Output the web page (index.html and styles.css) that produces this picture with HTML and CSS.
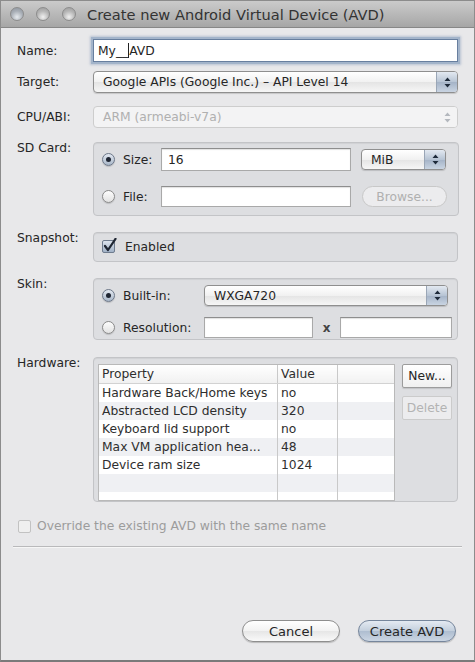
FILE: index.html
```html
<!DOCTYPE html>
<html lang="en">
<head>
    <meta charset="UTF-8">
    <meta name="viewport" content="width=device-width, initial-scale=1.0">
    <title>Create new Android Virtual Device (AVD)</title>
    <link rel="stylesheet" href="styles.css">
</head>
<body>

<div class="window">
    <div class="titlebar">
        <div class="lights">
            <span class="light light-close"></span>
            <span class="light"></span>
            <span class="light"></span>
        </div>
        <div class="title">Create new Android Virtual Device (AVD)</div>
    </div>

    <div class="content">
        <div class="row row-name">
            <div class="label">Name:</div>
            <div class="text-field focused">My__<span class="caret"></span>AVD</div>
        </div>

        <div class="row row-target">
            <div class="label">Target:</div>
            <div class="popup popup-wide">
                <span class="popup-text">Google APIs (Google Inc.) – API Level 14</span>
                <span class="popup-arrows">
                    <svg width="7" height="11" viewBox="0 0 7 11"><path d="M3.5 0.5 L6.5 4 L0.5 4 Z M3.5 10.5 L6.5 7 L0.5 7 Z" fill="#1e2a3a"/></svg>
                </span>
            </div>
        </div>

        <div class="row row-cpu">
            <div class="label">CPU/ABI:</div>
            <div class="popup popup-wide disabled">
                <span class="popup-text">ARM (armeabi-v7a)</span>
                <span class="popup-arrows">
                    <svg width="7" height="11" viewBox="0 0 7 11"><path d="M3.5 0.5 L6.5 4 L0.5 4 Z M3.5 10.5 L6.5 7 L0.5 7 Z" fill="#b4b8be"/></svg>
                </span>
            </div>
        </div>

        <div class="row row-group row-sd">
            <div class="label">SD Card:</div>
            <div class="group group-sd">
                <div class="group-line">
                    <div class="choice choice-sd"><span class="radio on"></span>Size:</div>
                    <div class="text-field field-sd">16</div>
                    <div class="popup popup-unit">
                        <span class="popup-text">MiB</span>
                        <span class="popup-arrows">
                            <svg width="7" height="11" viewBox="0 0 7 11"><path d="M3.5 0.5 L6.5 4 L0.5 4 Z M3.5 10.5 L6.5 7 L0.5 7 Z" fill="#1e2a3a"/></svg>
                        </span>
                    </div>
                </div>
                <div class="group-line line-file">
                    <div class="choice choice-sd"><span class="radio"></span>File:</div>
                    <div class="text-field field-sd"></div>
                    <div class="pill disabled">Browse...</div>
                </div>
            </div>
        </div>

        <div class="row row-group row-snapshot">
            <div class="label">Snapshot:</div>
            <div class="group group-snapshot">
                <div class="choice">
                    <svg class="check" width="15" height="15" viewBox="0 0 15 15">
                        <defs>
                            <linearGradient id="chk" x1="0" y1="0" x2="0" y2="1">
                                <stop offset="0" stop-color="#dfe6ef"/>
                                <stop offset="1" stop-color="#9fb0c6"/>
                            </linearGradient>
                        </defs>
                        <rect x="0.5" y="2.5" width="12" height="12" rx="1.5" fill="url(#chk)" stroke="#6f7c8e"/>
                        <path d="M3 8 L6 12 L13.5 0.8" fill="none" stroke="#1f2633" stroke-width="2.2" stroke-linecap="round" stroke-linejoin="round"/>
                    </svg>
                    Enabled
                </div>
            </div>
        </div>

        <div class="row row-group row-skin">
            <div class="label">Skin:</div>
            <div class="group group-skin">
                <div class="group-line">
                    <div class="choice choice-skin"><span class="radio on"></span>Built-in:</div>
                    <div class="popup popup-skin">
                        <span class="popup-text">WXGA720</span>
                        <span class="popup-arrows">
                            <svg width="7" height="11" viewBox="0 0 7 11"><path d="M3.5 0.5 L6.5 4 L0.5 4 Z M3.5 10.5 L6.5 7 L0.5 7 Z" fill="#1e2a3a"/></svg>
                        </span>
                    </div>
                </div>
                <div class="group-line line-res">
                    <div class="choice choice-skin"><span class="radio"></span>Resolution:</div>
                    <div class="text-field field-res"></div>
                    <span class="times">x</span>
                    <div class="text-field field-res2"></div>
                </div>
            </div>
        </div>

        <div class="row row-group row-hardware">
            <div class="label">Hardware:</div>
            <div class="group group-hardware">
                <div class="table-box">
                    <table class="props">
                        <thead>
                            <tr><th class="col-prop">Property</th><th class="col-val">Value</th><th class="col-extra"></th></tr>
                        </thead>
                        <tbody>
                            <tr><td>Hardware Back/Home keys</td><td>no</td><td></td></tr>
                            <tr><td>Abstracted LCD density</td><td>320</td><td></td></tr>
                            <tr><td>Keyboard lid support</td><td>no</td><td></td></tr>
                            <tr><td>Max VM application hea...</td><td>48</td><td></td></tr>
                            <tr><td>Device ram size</td><td>1024</td><td></td></tr>
                            <tr><td></td><td></td><td></td></tr>
                            <tr><td></td><td></td><td></td></tr>
                        </tbody>
                    </table>
                </div>
                <div class="side-buttons">
                    <div class="square-btn">New...</div>
                    <div class="square-btn disabled">Delete</div>
                </div>
            </div>
        </div>

        <div class="row row-override">
            <span class="box-empty"></span>
            Override the existing AVD with the same name
        </div>

        <div class="separator"></div>

        <div class="actions">
            <div class="pill pill-action">Cancel</div>
            <div class="pill pill-action default">Create AVD</div>
        </div>
    </div>
</div>

</body>
</html>
```

FILE: styles.css
```css
body {
    margin: 0;
    background-color: #e8e8ea;
}

.window {
    width: 475px;
    height: 662px;
    box-sizing: border-box;
    border: 1px solid #8c8c8c;
    border-bottom: 2px solid #7a7a7a;
    background-color: #e8e8ea;
    font-family: "DejaVu Sans", sans-serif;
    font-size: 12.3px;
    color: #262626;
    display: flex;
    flex-direction: column;
}

/* Barra de título */
.titlebar {
    height: 26px;
    flex: none;
    display: flex;
    align-items: center;
    background: linear-gradient(#cbcbcb, #a6a6a6);
    border-bottom: 1px solid #878787;
}
.lights {
    display: flex;
    gap: 12px;
    margin-left: 9px;
}
.light {
    width: 12px;
    height: 12px;
    border-radius: 50%;
    border: 1px solid #8c8c8c;
    background: radial-gradient(circle at 50% 75%, #f0f0f0, #b6b6b6 55%, #9a9a9a);
}
.light-close {
    background: radial-gradient(circle at 50% 75%, #e6eaee, #a8aeb6 55%, #8c939c);
}
.title {
    margin-left: 11px;
    font-size: 14.6px;
    color: #333;
}

.content {
    flex: 1;
    display: flex;
    flex-direction: column;
    padding: 0 16px 18px 16px;
}

.row {
    display: flex;
    align-items: center;
}
.row-group {
    align-items: flex-start;
}
.label {
    width: 76px;
    flex: none;
}
.row-group .label {
    line-height: 12px;
}

.row-name { margin-top: 11px; }
.row-target { margin-top: 9px; }
.row-cpu { margin-top: 13px; }
.row-sd { margin-top: 14px; }
.row-snapshot { margin-top: 16px; }
.row-skin { margin-top: 16px; }
.row-hardware { margin-top: 17px; }
.row-override { margin-top: 17px; color: #9c9c9c; }

/* Campos de texto */
.text-field {
    box-sizing: border-box;
    height: 21px;
    background-color: #fff;
    border: 1px solid #a9a9a9;
    border-top-color: #8e8e8e;
    box-shadow: inset 0 1px 1px rgba(0, 0, 0, 0.12);
    padding: 0 6px;
    display: flex;
    align-items: center;
}
.text-field.focused {
    height: 23px;
    width: 367px;
    margin-left: 0;
    padding-left: 4px;
    border: 1px solid #687f9f;
    box-shadow: 0 0 0 2px #a3b4ca, 0 0 2px 3px rgba(140, 160, 190, 0.5);
}
.caret {
    width: 1px;
    height: 15px;
    background-color: #222;
}

/* Pop-ups no estilo Aqua */
.popup {
    box-sizing: border-box;
    height: 22px;
    display: flex;
    align-items: center;
    border: 1px solid #8f8f8f;
    border-radius: 4px;
    background: linear-gradient(#ffffff, #f1f1f1 50%, #e4e4e4 51%, #f6f6f6);
    box-shadow: 0 1px 1px rgba(0, 0, 0, 0.15);
    overflow: hidden;
}
.popup-wide { width: 365px; }
.popup-text {
    flex: 1;
    padding-left: 9px;
    white-space: nowrap;
}
.popup-arrows {
    width: 20px;
    align-self: stretch;
    display: flex;
    align-items: center;
    justify-content: center;
    background: linear-gradient(#e3e9f1, #b7c4d4 50%, #a4b3c7 51%, #c9d4e2);
    border-left: 1px solid #9aa6b6;
}
.popup.disabled {
    border-color: #cdcdcd;
    background: #f3f3f4;
    box-shadow: none;
    color: #b0b0b0;
}
.popup.disabled .popup-arrows {
    background: #f3f3f4;
    border-left: none;
}
.popup-unit {
    width: 85px;
    height: 21px;
    margin-left: 10px;
}
.popup-skin {
    width: 244px;
    height: 21px;
}

/* Grupos */
.group {
    flex: 1;
    box-sizing: border-box;
    background-color: #dddee1;
    border: 1px solid #c3c4c7;
    border-radius: 4px;
    box-shadow: inset 0 1px 1px rgba(0, 0, 0, 0.06);
}
.group-sd {
    height: 74px;
    padding: 5px 11px 0 8px;
}
.group-snapshot {
    height: 30px;
    padding: 0 8px;
    display: flex;
    align-items: center;
}
.group-skin {
    height: 62px;
    padding: 6px 5px 0 8px;
}
.group-hardware {
    height: 145px;
    padding: 6px 5px 0 4px;
    display: flex;
    gap: 7px;
}

.group-line {
    display: flex;
    align-items: center;
    height: 23px;
}
.line-file {
    margin-top: 15px;
    height: 21px;
}
.group-skin .group-line { height: 21px; }
.group-skin .line-res { margin-top: 11px; }

.choice {
    display: flex;
    align-items: center;
    gap: 8px;
    flex: none;
}
.choice-sd { width: 59px; }
.choice-skin { width: 102px; }
.field-sd { width: 190px; height: 23px; }
.line-file .field-sd { height: 21px; }
.field-res { width: 109px; }
.field-res2 { width: 112px; }
.times {
    width: 27px;
    text-align: center;
    font-size: 12px;
    font-weight: bold;
    color: #444;
}

.radio {
    box-sizing: border-box;
    width: 13px;
    height: 13px;
    border-radius: 50%;
    border: 1px solid #8a8a8a;
    background: linear-gradient(#fdfdfd, #e2e2e2);
    box-shadow: 0 1px 1px rgba(0, 0, 0, 0.15);
    display: flex;
    align-items: center;
    justify-content: center;
}
.radio.on {
    border-color: #6d7889;
    background: linear-gradient(#e2e8f0, #a9b7c9);
}
.radio.on::after {
    content: "";
    width: 5px;
    height: 5px;
    border-radius: 50%;
    background-color: #1f2633;
}

.check {
    margin-top: -3px;
}

/* Tabela de propriedades */
.table-box {
    box-sizing: border-box;
    width: 297px;
    height: 137px;
    background-color: #fff;
    border: 1px solid #b9b9b9;
    overflow: hidden;
}
.props {
    width: 100%;
    border-collapse: collapse;
    table-layout: fixed;
}
.props th, .props td {
    height: 18px;
    padding: 0 0 0 3px;
    text-align: left;
    font-weight: normal;
    white-space: nowrap;
    overflow: hidden;
    border-right: 1px solid #c9c9c9;
    color: #2e2e2e;
}
.props th:last-child, .props td:last-child {
    border-right: none;
}
.props th {
    background: linear-gradient(#ffffff, #f1f1f1);
    border-bottom: 1px solid #d2d2d2;
}
.col-prop { width: 175px; }
.col-val { width: 56px; }
.props tbody tr:nth-child(even) {
    background-color: #eff0f3;
}

.side-buttons {
    display: flex;
    flex-direction: column;
    gap: 8px;
    width: 50px;
}
.square-btn {
    box-sizing: border-box;
    height: 24px;
    display: flex;
    align-items: center;
    justify-content: center;
    background: linear-gradient(#ffffff, #f0f0f0);
    border: 1px solid #9c9c9c;
    border-radius: 2px;
    box-shadow: 0 1px 1px rgba(0, 0, 0, 0.12);
}
.square-btn.disabled {
    color: #b3b3b3;
    border-color: #cbcbcb;
    background: #ececee;
    box-shadow: none;
}

.box-empty {
    box-sizing: border-box;
    width: 13px;
    height: 13px;
    margin-left: 1px;
    margin-right: 6px;
    border: 1px solid #c2c2c2;
    border-radius: 2px;
    background: #efefef;
}

.separator {
    margin: 13px -4px 0 -4px;
    height: 1px;
    background-color: #b9b9bb;
    border-bottom: 1px solid #f6f6f6;
}

/* Botões de ação */
.actions {
    margin-top: auto;
    display: flex;
    justify-content: flex-end;
    gap: 18px;
    padding-right: 2px;
}
.pill {
    box-sizing: border-box;
    height: 21px;
    width: 85px;
    display: flex;
    align-items: center;
    justify-content: center;
    border-radius: 11px;
    border: 1px solid #8e8e8e;
    background: linear-gradient(#ffffff, #f2f2f2 50%, #e6e6e6 51%, #f9f9f9);
    box-shadow: 0 1px 1px rgba(0, 0, 0, 0.2);
}
.pill.disabled {
    margin-left: 11px;
    color: #b0b0b0;
    border-color: #c8c8c8;
    background: #ececee;
    box-shadow: none;
}
.pill-action {
    width: 98px;
    height: 22px;
    font-size: 13px;
}
.pill-action.default {
    border-color: #76869c;
    background: linear-gradient(#e4eaf2, #c3cfdd 50%, #aebdd0 51%, #cbd6e3);
}
```
